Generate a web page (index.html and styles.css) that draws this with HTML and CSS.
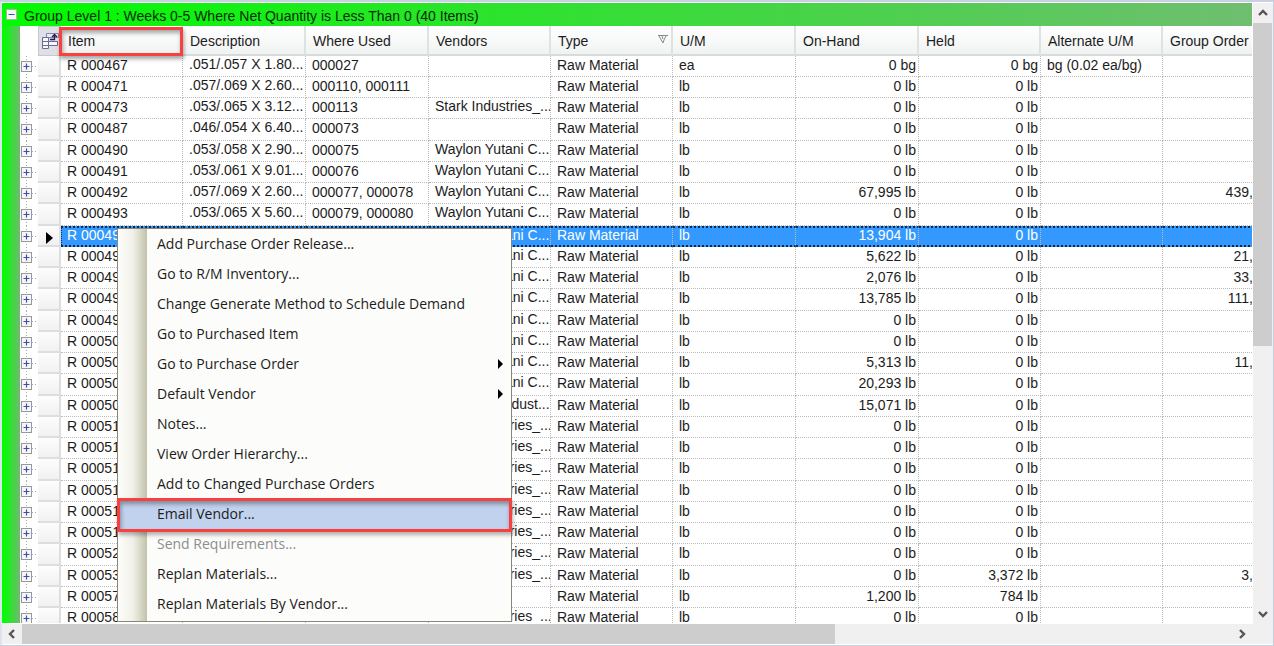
FILE: index.html
```html
<!DOCTYPE html>
<html lang="en">
<head>
<meta charset="utf-8">
<title>Group Level 1</title>
<link rel="stylesheet" href="styles.css">
</head>
<body>
<div class="window">
  <main class="view">
    <header class="group-bar">
      <button class="toggle" type="button" aria-label="Collapse group">
        <svg width="11" height="11" viewBox="0 0 11 11"><rect x=".5" y=".5" width="10" height="10" fill="#f4f6f4" stroke="#a9b3a9"/><path d="M2.5 5.5h6" stroke="#3c4fae"/></svg>
      </button>
      <h1 class="group-title">Group Level 1 : Weeks 0-5 Where Net Quantity is Less Than 0 (40 Items)</h1>
    </header>
    <div class="group-body">
      <div class="strip"></div>
      <div class="grid-clip">
        <table class="grid">
          <colgroup>
            <col class="c-tree"><col class="c-sel"><col class="c-a"><col class="c-b"><col class="c-b"><col class="c-a"><col class="c-a"><col class="c-b"><col class="c-b"><col class="c-a"><col class="c-a"><col class="c-last">
          </colgroup>
          <thead>
            <tr>
              <td class="blank"></td>
              <td class="chooser">
                <svg width="18" height="20" viewBox="0 0 18 20" fill="none">
                  <path d="M5.5 2.5h12v4h-12z" fill="#e9e9f4" stroke="#8585ad"/>
                  <path d="M1.500 6.500h6v11h-6zM7.500 10.500h9v4h-9z" stroke="#6a6a9c" fill="#f8f8fd"/>
                  <path d="M1.500 10.500h6M1.500 14.500h6" stroke="#6a6a9c"/>
                  <path d="M9 8.500h4.500V4M11 6l2.500-2.500L16 6" stroke="#1d1d55" stroke-width="1.300"/>
                </svg>
              </td>
              <th class="marked">Item</th><th>Description</th><th>Where Used</th><th>Vendors</th>
              <th><span class="head-flex">Type<svg width="10" height="9" viewBox="0 0 10 9" fill="none" stroke="#8a8a8a"><path d="M0 .5h10M1 1l4 7 1-3 2-4M4 1l1 3"/></svg></span></th>
              <th>U/M</th><th>On-Hand</th><th>Held</th><th>Alternate U/M</th><th>Group Order</th>
            </tr>
          </thead>
          <tbody id="rows"></tbody>
        </table>
      </div>
    </div>
  </main>
  <div class="vbar">
    <button class="arrow" type="button" aria-label="Scroll up"><svg width="10" height="8" viewBox="0 0 10 8"><path d="M1 6l4-4 4 4" /></svg></button>
    <div class="vthumb"></div>
    <div class="rest"></div>
    <button class="arrow" type="button" aria-label="Scroll down"><svg width="10" height="8" viewBox="0 0 10 8"><path d="M1 2l4 4 4-4" /></svg></button>
  </div>
  <div class="hbar">
    <button class="arrow" type="button" aria-label="Scroll left"><svg width="8" height="10" viewBox="0 0 8 10"><path d="M6 1L2 5l4 4" /></svg></button>
    <div class="hthumb"></div>
    <div class="rest"></div>
    <button class="arrow" type="button" aria-label="Scroll right"><svg width="8" height="10" viewBox="0 0 8 10"><path d="M2 1l4 4-4 4" /></svg></button>
  </div>
  <div class="corner"></div>
</div>

<nav class="menu">
  <button class="item" type="button">Add Purchase Order Release...</button>
  <button class="item" type="button">Go to R/M Inventory...</button>
  <button class="item" type="button">Change Generate Method to Schedule Demand</button>
  <button class="item" type="button">Go to Purchased Item</button>
  <button class="item sub" type="button">Go to Purchase Order</button>
  <button class="item sub" type="button">Default Vendor</button>
  <button class="item" type="button">Notes...</button>
  <button class="item" type="button">View Order Hierarchy...</button>
  <button class="item" type="button">Add to Changed Purchase Orders</button>
  <button class="item active" type="button">Email Vendor...</button>
  <button class="item" type="button" disabled>Send Requirements...</button>
  <button class="item" type="button">Replan Materials...</button>
  <button class="item" type="button">Replan Materials By Vendor...</button>
</nav>
<script src="app.js"></script>
</body>
</html>
```
FILE: styles.css
```css
* { box-sizing: border-box; }

body {
  margin: 0;
  background: #fff;
  color: #1c1c1c;
  font: 14px/18px "Liberation Sans", Arial, sans-serif;
}

button {
  padding: 0;
  border: 0;
  background: none;
  color: inherit;
  font: inherit;
}

svg { display: block; }

.window {
  display: grid;
  grid-template-columns: minmax(0, 1fr) 20px;
  grid-template-rows: minmax(0, 1fr) 20px;
  column-gap: 1px;
  height: 100vh;
  padding: 3px 1px 2px 2px;
  background: linear-gradient(#c9d0e4, #c9d0e4) top / 100% 2px no-repeat,
    linear-gradient(#c3d0df, #c3d0df) bottom / 100% 1px no-repeat,
    linear-gradient(#c3d0df, #c3d0df) right / 1px 100% no-repeat,
    linear-gradient(#dfe3ee, #dfe3ee) left / 2px 100% no-repeat, #fff;
}

.view {
  display: flex;
  flex-direction: column;
  min-height: 0;
  overflow: hidden;
  padding-bottom: 1px;
}

.group-bar {
  display: flex;
  flex: none;
  align-items: flex-start;
  gap: 7px;
  height: 23px;
  padding: 5px 4px;
  background: linear-gradient(90deg, #00fb00, #6fbe70);
}

.toggle { margin-top: 1px; }

.group-title {
  margin: 0;
  color: #052c05;
  font-size: 14px;
  font-weight: 400;
  line-height: 17px;
  white-space: nowrap;
}

.group-body {
  display: flex;
  flex: 1;
  min-height: 0;
}

.strip {
  flex: none;
  width: 18px;
  background: linear-gradient(90deg, #0f0 10%, #72b872);
}

.grid-clip {
  flex: 1;
  min-width: 0;
  overflow: hidden;
}

.grid {
  width: 1274px;
  table-layout: fixed;
  border-collapse: separate;
  border-spacing: 0;
}

.c-tree { width: 18px; }
.c-sel { width: 23px; }
.c-a { width: 122px; }
.c-b { width: 123px; }
.c-last { width: 131px; }

.grid th {
  height: 30px;
  padding: 2px 6px 0 7px;
  border-right: 2px solid #dde2e3;
  border-bottom: 2px solid #d6dbdc;
  background: linear-gradient(#fff, #f1f2f2);
  font-weight: 400;
  text-align: left;
  white-space: nowrap;
}

.head-flex {
  display: flex;
  align-items: center;
  justify-content: space-between;
  margin-right: -3px;
}

.head-flex svg { margin-bottom: 4px; }

.blank { padding: 0; }

.chooser {
  padding: 0 2px;
  border: 1px solid #c5c8cc;
  background: #dfe0e4;
}

.grid .marked { position: relative; }

.marked::after {
  content: "";
  position: absolute;
  inset: 1px -2px -2px -2px;
  border: 3px solid #f8403f;
  box-shadow: 1px 3px 4px rgba(0, 0, 0, .35), inset 1px 3px 4px rgba(0, 0, 0, .35);
}

.grid tbody td {
  height: 21px;
  padding: 0 2px 0 6px;
  border-right: 1px dotted #bcbcbc;
  border-bottom: 1px dotted #bcbcbc;
  line-height: 18px;
  overflow: hidden;
  vertical-align: top;
  white-space: nowrap;
}

.grid tbody tr:nth-child(4n) td { height: 22px; }

.grid tbody .raised { line-height: 16px; }
.grid tbody .num { text-align: right; }

.grid tbody .tree {
  padding: 0;
  border: 0;
  background: repeating-linear-gradient(#aaa 0 1px, transparent 1px 3px) 6px 0 / 1px 100% no-repeat,
    repeating-linear-gradient(90deg, #aaa 0 1px, transparent 1px 3px) 6px 10px / 11px 1px no-repeat;
}

.expand { display: block; }

.grid tbody .sel {
  padding: 0 0 0 8px;
  border-right: 2px solid #dcdfe0;
  border-bottom: 2px solid #dcdfe0;
  background: linear-gradient(#fdfdfd, #f1f1f1);
  vertical-align: bottom;
}

.sel svg { margin-bottom: 1px; }

.grid tbody .current td:nth-child(n + 3) {
  border-top: 2px dotted #10294a;
  border-bottom: 2px dotted #10294a;
  background: #3399ff;
  color: #fff;
  line-height: 15px;
}

.grid tbody .current td:nth-child(3) { border-left: 1px dotted #10294a; padding-left: 5px; }

.vbar {
  display: flex;
  flex-direction: column;
  background: #f0f0f0;
}

.hbar {
  display: flex;
  background: #f0f0f0;
}

.arrow {
  display: flex;
  flex: none;
  align-items: center;
  justify-content: center;
  width: 20px;
  height: 20px;
}

.arrow path {
  fill: none;
  stroke: #555;
  stroke-width: 2.400;
}

.vthumb { flex: 0 0 52%; margin-right: 1px; background: #cdcdcd; }
.hthumb { flex: 0 0 65%; background: #cdcdcd; }
.rest { flex: 1; }
.corner { margin-left: -1px; background: #f0f0f0; }

.menu {
  position: absolute;
  top: 228px;
  left: 117px;
  display: flex;
  flex-direction: column;
  width: 395px;
  padding: 1px 0;
  border: 1px solid #8a867a;
  background: linear-gradient(90deg, #fdfdfb 0, #f1f0e8 15px, #c2c2aa 29px, #fcfcfa 29px);
}

.item {
  height: 30px;
  padding: 0 8px 2px 39px;
  font: 14px/28px "Open Sans", "Noto Sans", sans-serif;
  text-align: left;
  white-space: nowrap;
}

.item:disabled { color: #8d8d8d; }

.sub {
  display: flex;
  align-items: center;
  justify-content: space-between;
}

.sub::after {
  content: "";
  border: 5px solid transparent;
  border-right: 0;
  border-left-color: #000;
}

.active {
  position: relative;
  background: #c1d2ee;
}

.active::after {
  content: "";
  position: absolute;
  inset: -2px -1px;
  border: 3px solid #f8403f;
  box-shadow: 1px 3px 4px rgba(0, 0, 0, .3), inset 1px 3px 4px rgba(0, 0, 0, .35);
}
```
FILE: app.js
```js
const W = "Waylon Yutani C...";
const S = "Stark Industries_...";
// item, description, where used, vendor, on-hand, held, group order
const data = [
  ["467", ".051/.057 X 1.80...", "000027", "", "0 bg", "0 bg", ""],
  ["471", ".057/.069 X 2.60...", "000110, 000111", "", "0 lb", "0 lb", ""],
  ["473", ".053/.065 X 3.12...", "000113", S, "0 lb", "0 lb", ""],
  ["487", ".046/.054 X 6.40...", "000073", "", "0 lb", "0 lb", ""],
  ["490", ".053/.058 X 2.90...", "000075", W, "0 lb", "0 lb", ""],
  ["491", ".053/.061 X 9.01...", "000076", W, "0 lb", "0 lb", ""],
  ["492", ".057/.069 X 2.60...", "000077, 000078", W, "67,995 lb", "0 lb", "439,000 lb"],
  ["493", ".053/.065 X 5.60...", "000079, 000080", W, "0 lb", "0 lb", ""],
  ["494", "", "", W, "13,904 lb", "0 lb", ""],
  ["495", "", "", W, "5,622 lb", "0 lb", "21,000 lb"],
  ["496", "", "", W, "2,076 lb", "0 lb", "33,000 lb"],
  ["497", "", "", W, "13,785 lb", "0 lb", "111,200 lb"],
  ["498", "", "", W, "0 lb", "0 lb", ""],
  ["500", "", "", W, "0 lb", "0 lb", "200 lb"],
  ["501", "", "", W, "5,313 lb", "0 lb", "11,000 lb"],
  ["502", "", "", W, "20,293 lb", "0 lb", ""],
  ["503", "", "", "Wayne H. Indust...", "15,071 lb", "0 lb", ""],
  ["510", "", "", S, "0 lb", "0 lb", ""],
  ["511", "", "", S, "0 lb", "0 lb", ""],
  ["512", "", "", S, "0 lb", "0 lb", ""],
  ["513", "", "", S, "0 lb", "0 lb", ""],
  ["514", "", "", S, "0 lb", "0 lb", ""],
  ["515", "", "", S, "0 lb", "0 lb", ""],
  ["520", "", "", S, "0 lb", "0 lb", ""],
  ["530", "", "", S, "0 lb", "3,372 lb", "3,000 lb"],
  ["570", "", "", "", "1,200 lb", "784 lb", ""],
  ["580", "", "", S, "0 lb", "0 lb", ""]
];

const plus = '<svg class="expand" width="12" height="20" viewBox="0 0 12 20"><rect x="1.5" y="5.5" width="10" height="10" fill="#f7f7f7" stroke="#999"/><path d="M3.5 10.500h6M6.500 7.500v6" stroke="#3c4fae" stroke-width="1.200"/></svg>';
const marker = '<svg width="8" height="12" viewBox="0 0 8 12"><path d="M0 0l7 6-7 6z"/></svg>';

document.getElementById("rows").innerHTML = data.map(([item, desc, used, vendor, hand, held, order], i) => `
<tr${i === 8 ? ' class="current"' : ""}>
<td class="tree">${plus}</td><td class="sel">${i === 8 ? marker : ""}</td>
<td>R 000${item}</td><td class="raised">${desc}</td><td>${used}</td><td class="raised">${vendor}</td>
<td>Raw Material</td><td>${i ? "lb" : "ea"}</td><td class="num">${hand}</td><td class="num">${held}</td>
<td>${i ? "" : "bg (0.02 ea/bg)"}</td><td class="num">${order}</td>
</tr>`).join("");
```
